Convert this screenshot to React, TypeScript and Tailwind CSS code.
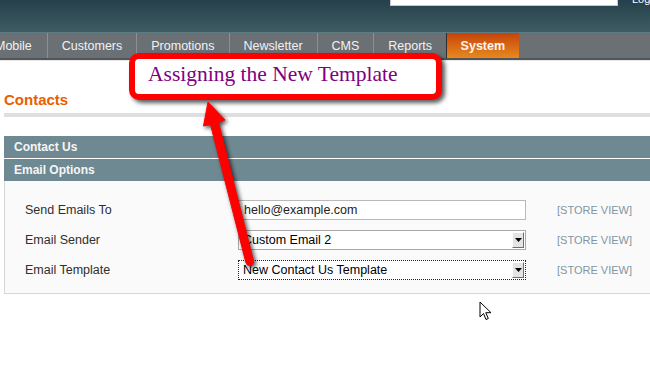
import React from 'react'

const navItems = ['Customers', 'Promotions', 'Newsletter', 'CMS', 'Reports']

function SelectBox({ value, focused }: { value: string; focused?: boolean }) {
    return (
        <div
            className={`flex h-[20px] w-[288px] items-stretch border bg-white ${
                focused ? 'border-dotted border-[#222]' : 'border-[#a9a9a9]'
            }`}
        >
            <div className="flex flex-1 items-center pl-[4px]">{value}</div>
            <div className="my-px mr-px flex w-[12px] items-center justify-center border-t border-l border-t-white border-l-white border-r border-b border-r-[#6f6f6f] border-b-[#6f6f6f] bg-[#e4e4e4]">
                <svg width="7" height="4" viewBox="0 0 7 4">
                    <path d="M0 0h7L3.5 4z" fill="#000" />
                </svg>
            </div>
        </div>
    )
}

function Row({ label, children }: { label: string; children: React.ReactNode }) {
    return (
        <div className="flex h-[20px] items-center">
            <div className="w-[213px] text-[#2f2f2f]">{label}</div>
            {children}
            <div className="ml-[31px] text-[11px] text-[#8196a4]">[STORE VIEW]</div>
        </div>
    )
}

export default function App() {
    return (
        <div className="relative h-[367px] w-[650px] overflow-hidden bg-white font-['Liberation_Sans',Arial,sans-serif]">
            <header className="flex h-[33px] items-start justify-end border-b border-[#5d7c81] bg-gradient-to-b from-[#25404a] to-[#3f5c63]">
                <div className="mt-[-16px] h-[22px] w-[228px] border border-[#c8c8c8] bg-white pl-[7px] text-[12px] leading-[20px] text-[#777]">
                    Global Record Search
                </div>
                <div className="mt-[-6px] w-[32px] pl-[14px] text-[11px] leading-none text-white">
                    Log
                </div>
            </header>

            <nav className="flex h-[27px] border-b-2 border-[#4f5558] bg-[#6a7074] text-[12.5px] text-[#f2f2f2]">
                <div className="ml-[-5px] flex items-center pt-[2px] pr-[15px]">Mobile</div>
                {navItems.map((item) => (
                    <div
                        key={item}
                        className="flex items-center border-l border-[#8a9094] px-[14px] pt-[2px]"
                    >
                        {item}
                    </div>
                ))}
                <div className="flex items-center border-l border-[#2f2f2f] bg-gradient-to-b from-[#c4430a] to-[#e8881f] px-[13.5px] pt-[2px] font-bold text-[#fff4ee]">
                    System
                </div>
            </nav>
            <div className="h-px bg-[#e8e8e8]" />

            <main className="pl-[4px]">
                <h1 className="mt-[30px] text-[15px] leading-[18px] font-bold text-[#eb5e00]">
                    Contacts
                </h1>
                <div className="mt-[4px] h-[4px] bg-[#dfdfdf]" />

                <div className="mt-[19px] flex h-[22px] items-center bg-[#6f8992] pl-[10px] text-[12px] font-bold text-[#f6f6f6]">
                    Contact Us
                </div>
                <div className="mt-px flex h-[22px] items-center bg-[#6f8992] pl-[10px] text-[12px] font-bold text-[#f6f6f6]">
                    Email Options
                </div>
                <div className="flex flex-col gap-[10px] border border-t-0 border-r-0 border-[#d6d6d6] bg-[#fafafa] pt-[19px] pb-[13px] pl-[20px] text-[12.5px]">
                    <Row label="Send Emails To">
                        <div className="flex h-[20px] w-[288px] items-center border border-[#b9b9b9] bg-white pl-[5px] text-[#222]">
                            hello@example.com
                        </div>
                    </Row>
                    <Row label="Email Sender">
                        <SelectBox value="Custom Email 2" />
                    </Row>
                    <Row label="Email Template">
                        <SelectBox value="New Contact Us Template" focused />
                    </Row>
                </div>
            </main>

            {/* callout */}
            <div className="absolute top-[53px] left-[129px] h-[47px] w-[313px] rounded-[10px] border-[6px] border-[#ff0000] bg-white pl-[13px] font-['Liberation_Serif','Times_New_Roman',serif] text-[21.5px] leading-[31px] text-[#800080] shadow-[3px_3px_4px_rgba(0,0,0,0.65)]">
                Assigning the New Template
            </div>

            {/* arrow */}
            <svg
                className="pointer-events-none absolute top-0 left-0 drop-shadow-[2px_2px_2px_rgba(0,0,0,0.7)]"
                width="650"
                height="367"
            >
                <polygon
                    points="208,102 225,120 218.5,122.5 253.5,261 246,263 210.5,124.5 203.5,126"
                    fill="#ff0000"
                    strokeLinejoin="round"
                    stroke="#ff0000"
                    strokeWidth="1"
                />
                <circle cx="249.8" cy="262" r="3.9" fill="#ff0000" />
            </svg>

            {/* mouse cursor */}
            <svg className="absolute top-[301px] left-[479px]" width="13" height="20" viewBox="0 0 13 20">
                <path
                    d="M1 1v15l3.5-3.5 2.5 6 2.3-1-2.5-5.8H12z"
                    fill="#fff"
                    stroke="#000"
                    strokeWidth="1"
                    strokeLinejoin="round"
                />
            </svg>
        </div>
    )
}
